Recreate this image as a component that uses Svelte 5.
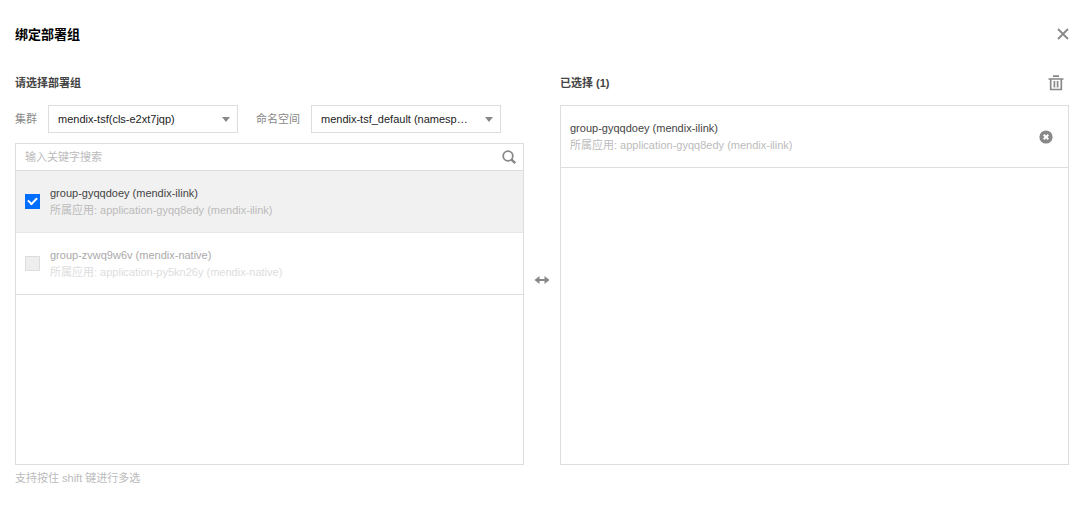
<script>
  const clusters = ["mendix-tsf(cls-e2xt7jqp)"];
  const namespaces = ["mendix-tsf_default (namespace-default)"];

  let cluster = $state(clusters[0]);
  let namespace = $state(namespaces[0]);
  let keyword = $state("");
  let open = $state(true);

  let groups = $state([
    {
      id: "group-gyqqdoey",
      name: "mendix-ilink",
      app: "application-gyqq8edy (mendix-ilink)",
      checked: true,
      disabled: false,
    },
    {
      id: "group-zvwq9w6v",
      name: "mendix-native",
      app: "application-py5kn26y (mendix-native)",
      checked: false,
      disabled: true,
    },
  ]);

  let visible = $derived(
    groups.filter((g) => (g.id + g.name).includes(keyword.trim()))
  );
  let selected = $derived(groups.filter((g) => g.checked));

  function clearAll() {
    groups.forEach((g) => (g.checked = false));
  }
</script>

{#if open}
  <div class="dialog" role="dialog" aria-labelledby="title">
    <header class="head">
      <h1 id="title">绑定部署组</h1>
      <button class="icon" aria-label="关闭" onclick={() => (open = false)}>
        <svg width="12" height="12" viewBox="0 0 12 12">
          <path d="M1 1l10 10M11 1L1 11" stroke="#888" stroke-width="1.8" fill="none" />
        </svg>
      </button>
    </header>

    <div class="transfer">
      <section class="column">
        <div class="caption">
          <h2>请选择部署组</h2>
        </div>

        <div class="filters">
          <label for="cluster">集群</label>
          <div class="select">
            <select id="cluster" bind:value={cluster}>
              {#each clusters as c}
                <option value={c}>{c}</option>
              {/each}
            </select>
          </div>
          <label class="second" for="namespace">命名空间</label>
          <div class="select">
            <select id="namespace" bind:value={namespace}>
              {#each namespaces as n}
                <option value={n}>{n}</option>
              {/each}
            </select>
          </div>
        </div>

        <div class="search">
          <input
            type="text"
            aria-label="搜索"
            placeholder="输入关键字搜索"
            bind:value={keyword}
          />
          <button class="icon" aria-label="搜索">
            <svg width="14" height="14" viewBox="0 0 14 14">
              <circle cx="6" cy="6" r="4.800" stroke="#888" stroke-width="1.8" fill="none" />
              <path d="M9.300 9.300l3.900 3.900" stroke="#888" stroke-width="2.4" />
            </svg>
          </button>
        </div>

        <ul class="list source">
          {#each visible as g (g.id)}
            <li class:checked={g.checked} class:disabled={g.disabled}>
              <label class="row">
                <input type="checkbox" bind:checked={g.checked} disabled={g.disabled} />
                <span class="text">
                  <span class="name">{g.id} ({g.name})</span>
                  <span class="app">所属应用: {g.app}</span>
                </span>
              </label>
            </li>
          {/each}
        </ul>

        <p class="tip">支持按住 shift 键进行多选</p>
      </section>

      <div class="arrow">
        <svg width="16" height="8" viewBox="0 0 16 8">
          <path d="M0.500 4L5.500 0v3h5V0l5 4l-5 4V5h-5v3z" fill="#888" />
        </svg>
      </div>

      <section class="column">
        <div class="caption">
          <h2>已选择 ({selected.length})</h2>
          <button class="icon trash" aria-label="清空" onclick={clearAll}>
            <svg width="16" height="16" viewBox="0 0 16 16">
              <path
                d="M5 1.200h6M0.500 4h15M2.700 4v10.500h10.600V4M6.400 6v6.500M9.600 6v6.500"
                stroke="#888"
                stroke-width="1.7"
                fill="none"
              />
            </svg>
          </button>
        </div>

        <ul class="list target">
          {#each selected as g (g.id)}
            <li>
              <div class="row">
                <span class="text">
                  <span class="name">{g.id} ({g.name})</span>
                  <span class="app">所属应用: {g.app}</span>
                </span>
                <button class="icon" aria-label="移除" onclick={() => (g.checked = false)}>
                  <svg width="14" height="14" viewBox="0 0 14 14">
                    <circle cx="7" cy="7" r="6.600" fill="#888" />
                    <path d="M4.700 4.700l4.600 4.600M9.300 4.700L4.700 9.300" stroke="#fff" stroke-width="2" />
                  </svg>
                </button>
              </div>
            </li>
          {/each}
        </ul>
      </section>
    </div>
  </div>
{/if}

<style>
  :global(body) {
    margin: 0;
    background: #fff;
  }

  .dialog {
    box-sizing: border-box;
    padding: 24px 11px 20px 15px;
    font-family: "Liberation Sans", "Noto Sans CJK SC", sans-serif;
    font-size: 11px;
    line-height: 17px;
    color: #444;
  }

  .head {
    display: flex;
    align-items: center;
    justify-content: space-between;
    height: 20px;
  }

  h1,
  h2,
  p,
  ul {
    margin: 0;
    padding: 0;
  }

  h1 {
    font-size: 13px;
    color: #000;
  }

  h2 {
    font-size: 11px;
    color: #444;
  }

  .icon {
    display: flex;
    padding: 0;
    border: 0;
    background: none;
    cursor: pointer;
  }

  .transfer {
    display: grid;
    grid-template-columns: minmax(0, 1fr) 36px minmax(0, 1fr);
    margin-top: 29px;
  }

  .column {
    display: flex;
    flex-direction: column;
  }

  .caption {
    display: flex;
    align-items: center;
    justify-content: space-between;
    height: 20px;
    margin-bottom: 12px;
  }

  .trash {
    margin-right: 5px;
  }

  .filters {
    display: flex;
    align-items: center;
    gap: 11px;
    margin-bottom: 10px;
    color: #888;
  }

  .second {
    margin-left: 7px;
  }

  .select {
    position: relative;
    width: 190px;
  }

  .select::after {
    content: "";
    position: absolute;
    right: 8px;
    top: 12px;
    border: 4px solid transparent;
    border-top: 5px solid #888;
    border-bottom: 0;
    pointer-events: none;
  }

  select {
    appearance: none;
    display: block;
    box-sizing: border-box;
    width: 100%;
    height: 28px;
    padding: 0 30px 0 9px;
    border: 1px solid #ddd;
    border-radius: 0;
    background: #fff;
    font: inherit;
    color: #222;
    text-overflow: ellipsis;
  }

  .search {
    display: flex;
    align-items: center;
    box-sizing: border-box;
    height: 28px;
    padding: 0 7px 0 9px;
    border: 1px solid #ddd;
  }

  .search input {
    flex: 1;
    min-width: 0;
    padding: 0;
    border: 0;
    outline: none;
    font: inherit;
    color: #444;
  }

  .search input::placeholder {
    color: #bbb;
  }

  .list {
    box-sizing: border-box;
    border: 1px solid #ddd;
    list-style: none;
  }

  .source {
    min-height: 294px;
    border-top: 0;
  }

  .target {
    min-height: 360px;
  }

  li {
    border-bottom: 1px solid #ddd;
  }

  li.checked {
    background: #f1f1f1;
    border-color: #e8e8e8;
  }

  .row {
    display: flex;
    align-items: center;
    gap: 10px;
    height: 61px;
    padding: 0 15px 0 9px;
  }

  .text {
    display: flex;
    flex: 1;
    flex-direction: column;
  }

  .app {
    color: #bbb;
  }

  .disabled .name {
    color: #aaa;
  }

  .disabled .app {
    color: #ddd;
  }

  input[type="checkbox"] {
    appearance: none;
    display: grid;
    place-items: center;
    box-sizing: border-box;
    width: 15px;
    height: 15px;
    margin: 0;
    border: 1px solid #ddd;
    background: #fff;
  }

  input[type="checkbox"]:checked {
    border-color: #006eff;
    background: #006eff;
  }

  input[type="checkbox"]:checked::before {
    content: "";
    box-sizing: border-box;
    width: 9px;
    height: 6px;
    margin-bottom: 3px;
    border: solid #fff;
    border-width: 0 0 2px 2px;
    transform: rotate(-45deg);
  }

  input[type="checkbox"]:disabled {
    background: #eee;
  }

  .tip {
    margin-top: 5px;
    color: #bbb;
  }

  .arrow {
    display: flex;
    align-items: center;
    justify-content: center;
  }
</style>
